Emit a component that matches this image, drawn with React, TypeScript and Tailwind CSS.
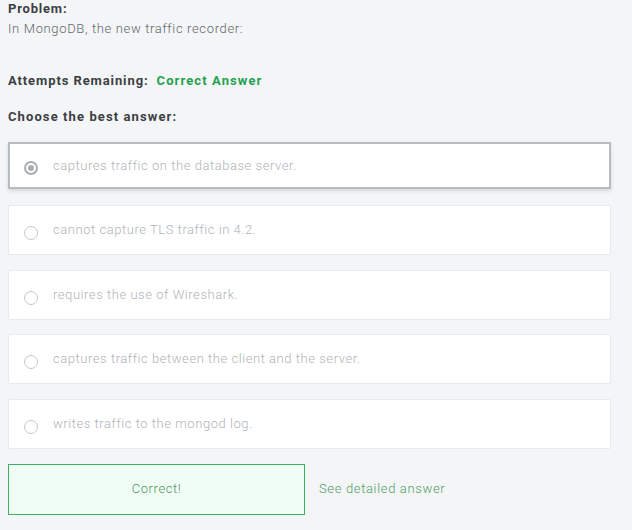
const options = [
  "captures traffic on the database server.",
  "cannot capture TLS traffic in 4.2.",
  "requires the use of Wireshark.",
  "captures traffic between the client and the server.",
  "writes traffic to the mongod log.",
];

export default function App() {
  return (
    <div className="min-h-[530px] w-[632px] bg-[#f4f5f7] px-2 font-['Roboto',sans-serif] text-[13px]">
      <p className="pt-px leading-[16px] font-bold tracking-[0.8px] text-[#3b4044]">Problem:</p>
      <p className="mt-[4px] leading-[16px] font-light tracking-[0.65px] text-[#62686c]">
        In MongoDB, the new traffic recorder:
      </p>

      <p className="mt-[36px] leading-[16px] font-bold tracking-[0.9px] text-[#3b4044]">
        Attempts Remaining:
        <span className="ml-[8px] tracking-[1.1px] text-[#23a150]">Correct Answer</span>
      </p>

      <p className="mt-[20px] leading-[16px] font-bold tracking-[1.1px] text-[#3b4044]">
        Choose the best answer:
      </p>

      <div className="mt-[17px] flex w-[603px] flex-col">
        {options.map((text, i) => {
          const selected = i === 0;
          return (
            <label
              key={text}
              className={
                selected
                  ? "mb-[16px] flex h-[47px] items-center border-2 border-[#b7bcc1] bg-white pl-[14px] shadow-[0_2px_4px_rgba(0,0,0,0.12)]"
                  : "mb-[14.5px] flex h-[50px] items-center rounded-[2px] border border-[#e8eaec] bg-white pl-[15px]"
              }
            >
              <span
                className={
                  selected
                    ? "mt-[4px] flex h-[14px] w-[14px] items-center justify-center rounded-full border-2 border-[#a9aeb2]"
                    : "mt-[6px] h-[14px] w-[14px] rounded-full border border-[#c5c8cb]"
                }
              >
                {selected && <span className="h-[6px] w-[6px] rounded-full bg-[#a9aeb2]" />}
              </span>
              <span className="ml-[15px] font-light tracking-[0.55px] text-[#b0b4b8]">{text}</span>
            </label>
          );
        })}
      </div>

      <div className="mt-[0.5px] flex items-center">
        <button className="h-[51px] w-[297px] border border-[#3cb267] bg-[#effdf4] font-light tracking-[0.6px] text-[#4f9466]">
          Correct!
        </button>
        <span className="ml-[14px] font-light tracking-[0.65px] text-[#50a06a]">See detailed answer</span>
      </div>
    </div>
  );
}
